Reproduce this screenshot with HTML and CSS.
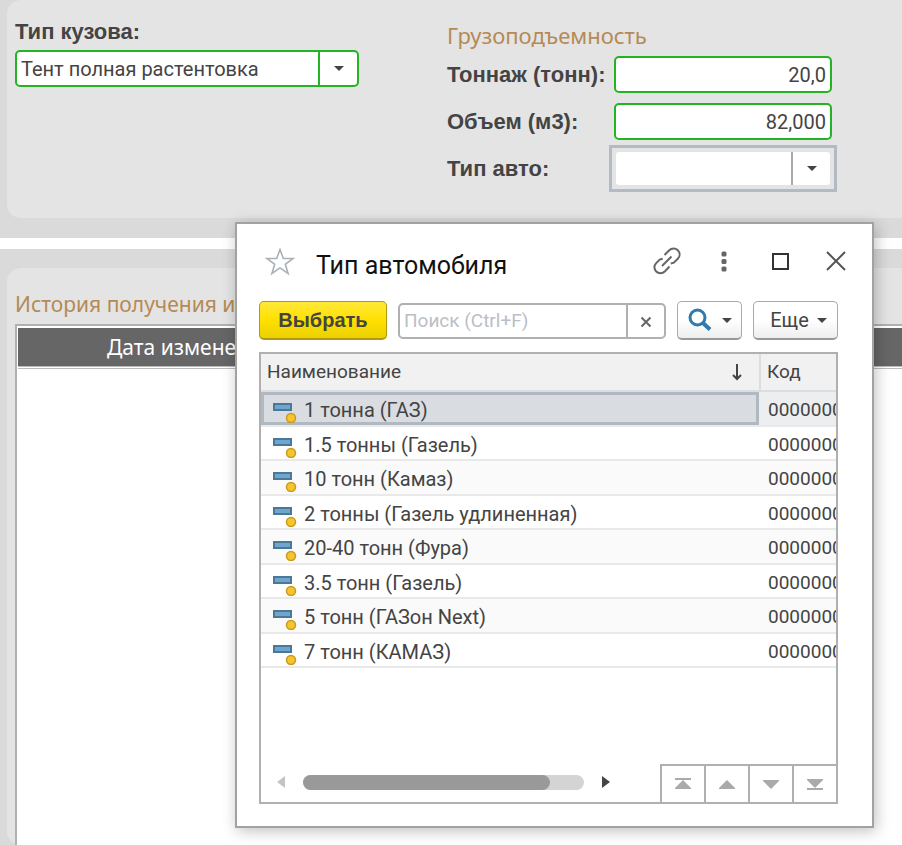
FILE: index.html
```html
<!DOCTYPE html>
<html lang="ru">
<head>
  <meta charset="UTF-8">
  <title>Тип автомобиля</title>
  <meta name="viewport" content="width=device-width, initial-scale=1.0">
  <link rel="stylesheet" href="styles.css">
</head>

<body>

  <section class="band band-top">
    <div class="panel form">
      <div class="body-type">
        <label for="body-type">Тип кузова:</label>
        <div class="combo">
          <select id="body-type">
            <option>Тент полная растентовка</option>
          </select>
        </div>
      </div>

      <div class="capacity">
        <h2>Грузоподъемность</h2>
        <div class="field">
          <label for="tonnage">Тоннаж (тонн):</label>
          <input id="tonnage" type="text" value="20,0">
        </div>
        <div class="field">
          <label for="volume">Объем (м3):</label>
          <input id="volume" type="text" value="82,000">
        </div>
        <div class="field">
          <label for="car-type">Тип авто:</label>
          <div class="combo focused">
            <select id="car-type">
              <option></option>
            </select>
          </div>
        </div>
      </div>
    </div>
  </section>

  <section class="band band-history">
    <div class="panel history">
      <h2>История получения и</h2>
      <div class="history-frame">
        <table>
          <thead>
            <tr><th>Дата изменения</th></tr>
          </thead>
        </table>
      </div>
    </div>
  </section>

  <div class="dialog" role="dialog" aria-labelledby="dialog-title">
    <header class="title-bar">
      <button aria-label="В избранное">
        <svg width="32" height="32" viewBox="0 0 32 32" fill="none" stroke="#aab1b8" stroke-width="1.6">
          <path d="M16 3.500l3.300 9h9.700l-7.700 5.800 2.800 9.200-8.100-5.600-8.100 5.600 2.800-9.200L3 12.500h9.700z"/>
        </svg>
      </button>
      <h1 id="dialog-title">Тип автомобиля</h1>
      <div class="window-tools">
        <button aria-label="Ссылка">
          <svg width="32" height="32" viewBox="0 0 32 32" fill="none" stroke="#666" stroke-width="2">
            <path d="M10 20l9.500-9.500M12.500 9l4.500-4.500c2.600-2.600 6.400-2.600 8.800-.2s2.400 6 0 8.400l-4 4-3 .8M17.500 20.500l-4.500 4.800c-2.600 2.600-6.400 2.600-8.800.2s-2.400-6 0-8.400l3.500-3.500 3-.8"/>
          </svg>
        </button>
        <button aria-label="Меню">
          <svg width="32" height="32" viewBox="0 0 32 32" fill="#666">
            <rect x="13.500" y="5.500" width="5" height="5" rx="1.500"/>
            <rect x="13.500" y="13" width="5" height="5" rx="1.500"/>
            <rect x="13.500" y="20.500" width="5" height="5" rx="1.500"/>
          </svg>
        </button>
        <button aria-label="Развернуть">
          <svg width="32" height="32" viewBox="0 0 32 32" fill="none" stroke="#333" stroke-width="2">
            <rect x="9" y="8" width="15" height="15"/>
          </svg>
        </button>
        <button aria-label="Закрыть">
          <svg width="32" height="32" viewBox="0 0 32 32" fill="none" stroke="#555" stroke-width="2">
            <path d="M7 6l18 18M25 6L7 24"/>
          </svg>
        </button>
      </div>
    </header>

    <div class="toolbar">
      <button class="btn btn-primary">Выбрать</button>
      <div class="search">
        <input type="text" placeholder="Поиск (Ctrl+F)" aria-label="Поиск">
        <button aria-label="Очистить">
          <svg width="12" height="12" viewBox="0 0 12 12" stroke="#666" stroke-width="2">
            <path d="M1.500 1.500l9 9M10.500 1.500l-9 9"/>
          </svg>
        </button>
      </div>
      <button class="btn btn-find" aria-label="Найти">
        <svg width="24" height="24" viewBox="0 0 24 24" fill="none" stroke="#2e79ae">
          <circle cx="9.500" cy="9.500" r="7.500" stroke-width="3"/>
          <path d="M15 15l7 6.500" stroke-width="4"/>
        </svg>
        <span class="arrow"></span>
      </button>
      <button class="btn btn-more">Еще <span class="arrow"></span></button>
    </div>

    <div class="list">
      <table>
        <thead>
          <tr>
            <th>
              <div class="head">Наименование
                <svg width="12" height="18" viewBox="0 0 12 18" fill="none" stroke="#444" stroke-width="2">
                  <path d="M6 1v15M2 12l4 4 4-4"/>
                </svg>
              </div>
            </th>
            <th>Код</th>
          </tr>
        </thead>
        <tbody id="rows"></tbody>
      </table>
      <div class="list-footer">
        <div class="scroll">
          <button class="scroll-left" aria-label="Влево"></button>
          <div class="track"><div class="thumb"></div></div>
          <button class="scroll-right" aria-label="Вправо"></button>
        </div>
        <div class="pager">
          <button aria-label="В начало">
            <svg width="16" height="12" viewBox="0 0 16 12" fill="#aaa"><path d="M0 0h16v2H0zM8 2l8 8v1H0v-1z"/></svg>
          </button>
          <button aria-label="Вверх">
            <svg width="16" height="12" viewBox="0 0 16 12" fill="#aaa"><path d="M8 2l8 8v1H0v-1z"/></svg>
          </button>
          <button aria-label="Вниз">
            <svg width="16" height="12" viewBox="0 0 16 12" fill="#aaa"><path d="M0 2h16v1l-8 8-8-8z"/></svg>
          </button>
          <button aria-label="В конец">
            <svg width="16" height="12" viewBox="0 0 16 12" fill="#aaa"><path d="M0 1h16v1l-8 8-8-8zM0 10h16v2H0z"/></svg>
          </button>
        </div>
      </div>
    </div>
  </div>

  <script src="script.js"></script>
</body>
</html>
```
FILE: styles.css
```css
:root {
  --bg-color: #dadada;
  --panel-color: #e4e4e4;
  --text-color: #444;
  --accent-color: #b58a55;
  --valid-color: #22b422;
  --line-color: #b0b0b0;
}

* {
  box-sizing: border-box;
}

body {
  margin: 0;
  min-height: 100vh;
  display: flex;
  flex-direction: column;
  position: relative;
  overflow: hidden;
  background: #fff;
  color: var(--text-color);
  font-family: Roboto, "Liberation Sans", Arial, sans-serif;
  font-size: 20px;
  line-height: 24px;
}

button, input, select {
  font: inherit;
  color: inherit;
  margin: 0;
  padding: 0;
}

button {
  border: none;
  background: none;
  cursor: pointer;
}

h1, h2 {
  margin: 0;
  font-weight: normal;
}

h2 {
  color: var(--accent-color);
  font-family: "Noto Sans", sans-serif;
  font-size: 21px;
}

.band {
  background: var(--bg-color);
  padding-left: 7px;
}

.band-top {
  padding-bottom: 20px;
  margin-bottom: 11px;
}

.band-history {
  flex: 1;
  display: flex;
  padding-top: 19px;
}

.panel {
  flex: 1;
  background: var(--panel-color);
  border-radius: 14px 0 0 14px;
}

/* Top form */
.form {
  display: flex;
  min-height: 218px;
  padding: 20px 70px 0 8px;
}

.form label {
  font-family: "Liberation Sans", Arial, sans-serif;
  font-size: 22px;
  font-weight: bold;
}

.body-type {
  width: 432px;
}

.body-type .combo {
  width: 344px;
  margin-top: 6px;
}

.combo {
  position: relative;
  height: 37px;
}

.combo select {
  appearance: none;
  width: 100%;
  height: 100%;
  padding: 0 44px 0 4px;
  border: 2px solid var(--valid-color);
  border-radius: 5px;
  background: #fff;
}

/* Divider and arrow drawn over the select */
.combo::after {
  content: "";
  position: absolute;
  top: 2px;
  right: 2px;
  bottom: 2px;
  width: 37px;
  border-left: 2px solid var(--valid-color);
  pointer-events: none;
}

.combo::before {
  content: "";
  position: absolute;
  top: 16px;
  right: 15px;
  border: 5px solid transparent;
  border-top-color: #444;
  border-bottom: none;
  pointer-events: none;
}

.capacity {
  display: flex;
  flex-direction: column;
}

.capacity h2 {
  margin: 3px 0 9px;
  font-size: 22px;
}

.field {
  display: grid;
  grid-template-columns: 167px 218px;
  align-items: center;
  margin-bottom: 10px;
}

.field input {
  width: 100%;
  height: 37px;
  padding: 0 4px;
  border: 2px solid var(--valid-color);
  border-radius: 5px;
  background: #fff;
  text-align: right;
}

.combo.focused {
  outline: 3px solid #b2bac3;
  outline-offset: 2px;
}

.combo.focused select {
  border-color: transparent;
  background-clip: padding-box;
}

.combo.focused::after {
  border-left-color: #aaa;
}

/* History */
.history {
  display: flex;
  flex-direction: column;
  padding: 24px 0 0 8px;
}

.history-frame {
  flex: 1;
  margin-top: 8px;
  border: 2px solid var(--line-color);
  border-width: 2px 0 0 2px;
  background: #fff;
}

.history-frame table {
  width: 100%;
  border-spacing: 0;
  border: 1px solid #fff;
  border-width: 2px 0 0 1px;
}

.history-frame th {
  height: 41px;
  padding: 0 0 0 89px;
  border-bottom: 3px double #bbb;
  background: #666 padding-box;
  color: #fff;
  font-family: "Noto Sans", sans-serif;
  font-size: 21px;
  font-weight: normal;
  text-align: left;
}

/* Dialog */
.dialog {
  position: absolute;
  top: 222px;
  left: 235px;
  right: 28px;
  padding: 22px 34px 22px 22px;
  border: 2px solid #a2a2a2;
  background: #fff;
  box-shadow: 2px 3px 14px rgba(0, 0, 0, 0.25);
}

.title-bar {
  display: flex;
  align-items: center;
  height: 32px;
  margin: 0 -14px 23px 5px;
}

.title-bar svg {
  display: block;
}

.title-bar h1 {
  flex: 1;
  margin: 8px 0 0 20px;
  color: #111;
  font-size: 25px;
}

.window-tools {
  display: flex;
  gap: 24px;
}

.toolbar {
  display: flex;
  gap: 11px;
  margin-bottom: 12px;
}

.btn {
  display: flex;
  flex-shrink: 0;
  align-items: center;
  justify-content: center;
  gap: 10px;
  height: 39px;
  border: 1px solid #aaa;
  border-bottom: 2px solid #999;
  border-radius: 5px;
  background: linear-gradient(#fff 50%, #eee);
}

.btn-primary {
  width: 128px;
  border-color: #b09a10;
  background: linear-gradient(#ffe93a, #ffe000 50%, #ecd000);
  font-family: "Liberation Sans", Arial, sans-serif;
  font-weight: bold;
}

.btn-find {
  width: 65px;
}

.btn-more {
  width: 85px;
  gap: 8px;
  padding-left: 6px;
}

.arrow {
  border: 5px solid transparent;
  border-top-color: #444;
  border-bottom: none;
}

.search {
  flex: 1;
  min-width: 0;
  display: flex;
  height: 36px;
  margin-top: 2px;
  border: 2px solid var(--line-color);
  border-radius: 5px;
}

.search input {
  flex: 1;
  min-width: 0;
  padding-left: 4px;
  border: none;
  background: none;
  font-size: 19px;
}

.search input::placeholder {
  color: #bbbec6;
}

.search button {
  width: 38px;
  border-left: 2px solid var(--line-color);
}

.list {
  display: flex;
  flex-direction: column;
  min-height: 452px;
  border: 2px solid var(--line-color);
  overflow: hidden;
}

.list table {
  width: 100%;
  table-layout: fixed;
  border-spacing: 0;
}

.list th {
  height: 38px;
  padding: 0 6px;
  border-bottom: 2px solid #ddd;
  background: #f1f1f1;
  font-size: 19px;
  font-weight: normal;
  text-align: left;
}

.list th + th {
  width: 77px;
  border-left: 2px solid #ddd;
}

.head {
  display: flex;
  align-items: center;
  justify-content: space-between;
  padding-right: 10px;
}

.list td {
  height: 34px;
  padding: 3px 0 0 12px;
  border-bottom: 2px solid #e9e9e9;
  line-height: 28px;
  overflow: hidden;
  white-space: nowrap;
}

/* Rows alternate between 34 and 35 pixels */
.list tr:nth-child(odd) td {
  height: 35px;
  background: #fafafa;
}

.list td + td {
  padding-left: 9px;
  font-size: 19px;
}

.list .selected td:first-child {
  background: #d9dde2 padding-box;
  box-shadow: inset 0 0 0 3px #b0b8c1;
}

.list .selected td + td {
  background: #eceef0;
}

.list td svg {
  width: 26px;
  height: 20px;
  margin-right: 5px;
  vertical-align: -6px;
}

.list-footer {
  display: flex;
  justify-content: space-between;
  margin-top: auto;
  height: 38px;
}

.scroll {
  display: flex;
  align-items: center;
  flex: 1;
  margin: 0 50px 2px 16px;
  gap: 18px;
}

.scroll button {
  border: 6px solid transparent;
}

.scroll .scroll-left {
  border-left: none;
  border-right: 8px solid #c4c4c4;
}

.scroll .scroll-right {
  border-right: none;
  border-left: 8px solid #444;
}

.track {
  flex: 1;
  height: 15px;
  border-radius: 8px;
  background: #d4d4d4;
}

.thumb {
  width: 88%;
  height: 100%;
  border-radius: 8px;
  background: #999;
}

.pager {
  display: flex;
  border-top: 2px solid var(--line-color);
}

.pager button {
  width: 44px;
  border-left: 2px solid var(--line-color);
}

.pager svg {
  display: block;
  margin: 0 auto;
}
```
FILE: script.js
```js
const carTypes = [
  "1 тонна (ГАЗ)",
  "1.5 тонны (Газель)",
  "10 тонн (Камаз)",
  "2 тонны (Газель удлиненная)",
  "20-40 тонн (Фура)",
  "3.5 тонн (Газель)",
  "5 тонн (ГАЗон Next)",
  "7 тонн (КАМАЗ)"
];

const itemIcon = `<svg viewBox="0 0 26 20">
  <rect x="1" y="1" width="17" height="6" fill="#6ea6cf" stroke="#4a7896" stroke-width="2"/>
  <circle cx="18" cy="15" r="4.500" fill="#f5c52e" stroke="#c99a1c" stroke-width="1.500"/>
</svg>`;

document.getElementById("rows").innerHTML = carTypes.map((name, i) => `
  <tr${i === 0 ? ' class="selected"' : ''}>
    <td>${itemIcon}${name}</td>
    <td>0000000</td>
  </tr>`).join("");
```
